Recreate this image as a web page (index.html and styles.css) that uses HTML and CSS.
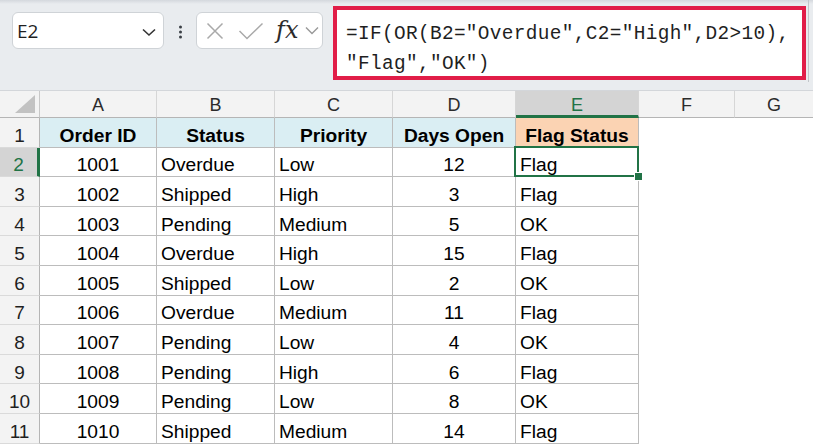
FILE: index.html
```html
<!DOCTYPE html>
<html>
<head>
<meta charset="utf-8">
<link rel="stylesheet" href="styles.css">
</head>
<body>
<div class="topbar">
  <div class="namebox">
    <span class="cellref">E2</span>
    <svg class="chev" width="16" height="10" viewBox="0 0 16 10"><path d="M2 2.5 L8 8 L14 2.5" fill="none" stroke="#333" stroke-width="1.6"/></svg>
  </div>
  <div class="dots">
    <svg width="32" height="16" viewBox="0 0 32 16"><circle cx="16.5" cy="3" r="1.5" fill="#3a3f45"/><circle cx="16.5" cy="8" r="1.5" fill="#3a3f45"/><circle cx="16.5" cy="13" r="1.5" fill="#3a3f45"/></svg>
  </div>
  <div class="fxbox">
    <svg class="ic-x" width="18" height="18" viewBox="0 0 18 18"><path d="M1.5 1.5 L16.5 16.5 M16.5 1.5 L1.5 16.5" stroke="#a9a9a9" stroke-width="1.5" fill="none"/></svg>
    <svg class="ic-check" width="26" height="18" viewBox="0 0 26 18"><path d="M1.5 9 L9 16.5 L24.5 1.5" stroke="#a9a9a9" stroke-width="1.5" fill="none"/></svg>
    <span class="fx">fx</span>
    <svg class="ic-chev" width="14" height="9" viewBox="0 0 14 9"><path d="M1 1.5 L7 7.5 L13 1.5" fill="none" stroke="#999" stroke-width="1.4"/></svg>
  </div>
  <div class="formula">=IF(OR(B2="Overdue",C2="High",D2&gt;10),
"Flag","OK")</div>
  <div class="formula-edge"></div>
</div>

<div class="sheet">
  <div class="corner"><span class="tri"></span></div>
  <div class="colhdr">A</div>
  <div class="colhdr">B</div>
  <div class="colhdr">C</div>
  <div class="colhdr">D</div>
  <div class="colhdr sel">E</div>
  <div class="colhdr">F</div>
  <div class="colhdr last">G</div>

  <div class="rowhdr">1</div>
  <div class="cell th">Order ID</div>
  <div class="cell th">Status</div>
  <div class="cell th">Priority</div>
  <div class="cell th">Days Open</div>
  <div class="cell th peach">Flag Status</div>
  <div class="blank"></div><div class="blank"></div>

  <div class="rowhdr sel">2</div>
  <div class="cell c">1001</div><div class="cell">Overdue</div><div class="cell">Low</div><div class="cell c">12</div><div class="cell active">Flag</div>
  <div class="blank"></div><div class="blank"></div>

  <div class="rowhdr">3</div>
  <div class="cell c">1002</div><div class="cell">Shipped</div><div class="cell">High</div><div class="cell c">3</div><div class="cell">Flag</div>
  <div class="blank"></div><div class="blank"></div>

  <div class="rowhdr">4</div>
  <div class="cell c">1003</div><div class="cell">Pending</div><div class="cell">Medium</div><div class="cell c">5</div><div class="cell">OK</div>
  <div class="blank"></div><div class="blank"></div>

  <div class="rowhdr">5</div>
  <div class="cell c">1004</div><div class="cell">Overdue</div><div class="cell">High</div><div class="cell c">15</div><div class="cell">Flag</div>
  <div class="blank"></div><div class="blank"></div>

  <div class="rowhdr">6</div>
  <div class="cell c">1005</div><div class="cell">Shipped</div><div class="cell">Low</div><div class="cell c">2</div><div class="cell">OK</div>
  <div class="blank"></div><div class="blank"></div>

  <div class="rowhdr">7</div>
  <div class="cell c">1006</div><div class="cell">Overdue</div><div class="cell">Medium</div><div class="cell c">11</div><div class="cell">Flag</div>
  <div class="blank"></div><div class="blank"></div>

  <div class="rowhdr">8</div>
  <div class="cell c">1007</div><div class="cell">Pending</div><div class="cell">Low</div><div class="cell c">4</div><div class="cell">OK</div>
  <div class="blank"></div><div class="blank"></div>

  <div class="rowhdr">9</div>
  <div class="cell c">1008</div><div class="cell">Pending</div><div class="cell">High</div><div class="cell c">6</div><div class="cell">Flag</div>
  <div class="blank"></div><div class="blank"></div>

  <div class="rowhdr">10</div>
  <div class="cell c">1009</div><div class="cell">Pending</div><div class="cell">Low</div><div class="cell c">8</div><div class="cell">OK</div>
  <div class="blank"></div><div class="blank"></div>

  <div class="rowhdr">11</div>
  <div class="cell c">1010</div><div class="cell">Shipped</div><div class="cell">Medium</div><div class="cell c">14</div><div class="cell">Flag</div>
  <div class="blank"></div><div class="blank"></div>
</div>
</body>
</html>
```

FILE: styles.css
```css
html, body {
  margin: 0;
  padding: 0;
  background: #ffffff;
}
body {
  width: 813px;
  height: 446px;
  overflow: hidden;
  font-family: "Liberation Sans", Arial, sans-serif;
}

/* ---------- formula bar area ---------- */
.topbar {
  height: 90px;
  background: linear-gradient(#d4d8dd, #e9ecef 4px);
  display: flex;
  align-items: flex-start;
  border-bottom: 1px solid #d3d6da;
}
.namebox {
  margin: 12px 0 0 12px;
  width: 152px;
  height: 37px;
  box-sizing: border-box;
  background: #ffffff;
  border: 1px solid #cfd3d7;
  border-radius: 6px;
  display: flex;
  align-items: center;
  justify-content: space-between;
  padding: 0 6px 0 4px;
}
.cellref {
  font-family: "Open Sans", sans-serif;
  font-size: 19px;
  color: #1f1f1f;
}
.chev { margin-top: 2px; }
.dots {
  margin-top: 24px;
  width: 32px;
  height: 16px;
}
.fxbox {
  margin-top: 12px;
  width: 127px;
  height: 37px;
  box-sizing: border-box;
  background: #ffffff;
  border: 1px solid #cfd3d7;
  border-radius: 6px;
  display: flex;
  align-items: center;
  padding-left: 9px;
}
.ic-x { margin-top: 1px; }
.ic-check { margin-left: 14px; }
.fx {
  margin-left: 12px;
  font-family: "DejaVu Serif", "Liberation Serif", serif;
  font-style: italic;
  font-size: 24px;
  color: #2b2b2b;
  line-height: 1;
  margin-top: -2px;
}
.ic-chev { margin-left: 7px; }

.formula {
  margin: 6px 0 0 10px;
  width: 473px;
  height: 74px;
  box-sizing: border-box;
  border: 4px solid #e11d48;
  background: #ffffff;
  font-family: "Liberation Mono", "DejaVu Sans Mono", monospace;
  font-size: 19.4px;
  letter-spacing: 0.35px;
  line-height: 29.5px;
  color: #1f1f1f;
  white-space: pre;
  padding: 10px 0 0 9px;
}
.formula-edge {
  margin: 0 0 0 2px;
  width: 1px;
  height: 82px;
  background: #c2c6ca;
}

/* ---------- sheet ---------- */
.sheet {
  display: grid;
  grid-template-columns: 40px 117px 118px 118px 123px 123px 96px 1fr;
  grid-template-rows: 27px repeat(11, 29.6px);
}
.corner {
  background: #f3f3f3;
  border-right: 1px solid #c8c8c8;
  border-bottom: 1px solid #b5b5b5;
  position: relative;
}
.tri {
  position: absolute;
  right: 4px;
  bottom: 4px;
  width: 0;
  height: 0;
  border-left: 20px solid transparent;
  border-bottom: 18px solid #c2c2c2;
}
.colhdr {
  background: #f3f3f3;
  border-right: 1px solid #d6d6d6;
  border-bottom: 1px solid #b5b5b5;
  display: flex;
  align-items: center;
  justify-content: center;
  font-size: 18px;
  color: #2b2b2b;
  padding-top: 2px;
}
.colhdr.last { border-right: none; }
.colhdr.sel {
  background: #d4d4d4;
  color: #217346;
  border-bottom: 3px solid #217346;
  padding-top: 4px;
}
.rowhdr {
  background: #f3f3f3;
  border-right: 1px solid #b5b5b5;
  border-bottom: 1px solid #dadada;
  display: flex;
  align-items: center;
  justify-content: center;
  font-size: 19px;
  color: #1f1f1f;
  padding-top: 7px;
}
.rowhdr.sel {
  background: #d4d4d4;
  color: #217346;
  border-right: 3px solid #217346;
}
.cell {
  border-right: 1px solid #bcbcbc;
  border-bottom: 1px solid #bcbcbc;
  display: flex;
  align-items: center;
  padding: 7px 0 0 4px;
  font-size: 19.2px;
  color: #000000;
  white-space: nowrap;
  position: relative;
}
.cell.c {
  justify-content: center;
  padding-left: 0;
}
.cell.th {
  justify-content: center;
  padding-left: 0;
  font-weight: bold;
  background: #daeef3;
}
.cell.th.peach { background: #fbd3b3; }
.cell.active::after {
  content: "";
  position: absolute;
  left: -2px;
  top: -2px;
  right: -1px;
  bottom: -1px;
  border: 2px solid #217346;
}
.cell.active::before {
  content: "";
  position: absolute;
  right: -5px;
  bottom: -5px;
  width: 7px;
  height: 7px;
  background: #217346;
  border: 1px solid #ffffff;
  z-index: 2;
}
.blank { background: #ffffff; }
```
